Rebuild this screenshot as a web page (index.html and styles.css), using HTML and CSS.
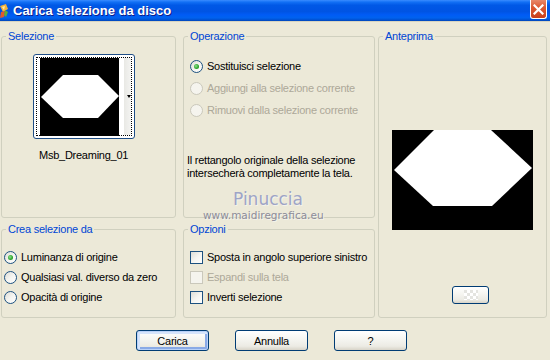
FILE: index.html
```html
<!DOCTYPE html>
<html lang="it">

<head>
  <meta charset="UTF-8">
  <meta name="viewport" content="width=device-width, initial-scale=1.0">
  <title>Carica selezione da disco</title>
  <link rel="stylesheet" href="styles.css">
</head>

<body>
  <div class="window">
    <div class="titlebar">
      <svg class="app-icon" width="9" height="16" viewBox="0 0 9 16">
        <path d="M0 3 L6 1 L8 6 L3 9 Z" fill="#f2b33d"/>
        <path d="M1 9 L5 8 L4 14 L0 15 Z" fill="#e2582c"/>
        <path d="M5 7 L8 9 L6 14 L4 12 Z" fill="#5fae3a"/>
        <path d="M2 4 L5 3 L4 7 Z" fill="#ffe9a8"/>
      </svg>
      <span class="title">Carica selezione da disco</span>
      <span class="close">
        <svg width="11" height="11" viewBox="0 0 11 11">
          <path d="M1.5 1.5 L9.5 9.5 M9.5 1.5 L1.5 9.5" stroke="#fff" stroke-width="2.2" stroke-linecap="square"/>
        </svg>
      </span>
    </div>

    <div class="dialog">
      <div class="panels">
        <fieldset class="group col-left">
          <legend>Selezione</legend>
          <div class="thumb">
            <div class="thumb-focus">
              <svg width="79" height="78" viewBox="0 0 79 78">
                <rect width="79" height="78" fill="#000"/>
                <polygon points="1,39 23,17 58,17 79,38 58,60 23,60" fill="#fff"/>
              </svg>
              <div class="thumb-arrow"><span class="caret"></span></div>
            </div>
          </div>
          <div class="thumb-name">Msb_Dreaming_01</div>
        </fieldset>

        <fieldset class="group col-mid op">
          <legend>Operazione</legend>
          <div class="op-list">
            <label class="opt"><span class="radio checked"></span>Sostituisci selezione</label>
            <label class="opt disabled"><span class="radio"></span>Aggiungi alla selezione corrente</label>
            <label class="opt disabled"><span class="radio"></span>Rimuovi dalla selezione corrente</label>
          </div>
          <p class="note">Il rettangolo originale della selezione<br>intersecherà completamente la tela.</p>
          <div class="watermark">
            <span class="wm-name">Pinuccia</span>
            <span class="wm-site">www.maidiregrafica.eu</span>
          </div>
        </fieldset>

        <fieldset class="group col-right preview">
          <legend>Anteprima</legend>
          <svg class="preview-img" width="141" height="100" viewBox="0 0 141 100">
            <rect width="141" height="100" fill="#000"/>
            <polygon points="2,40 42,0 99,0 140,38 100,76 41,76" fill="#fff"/>
          </svg>
          <button class="btn btn-small"><span class="checker"></span></button>
        </fieldset>

        <fieldset class="group col-left">
          <legend>Crea selezione da</legend>
          <div class="opt-list crea">
            <label class="opt"><span class="radio checked"></span>Luminanza di origine</label>
            <label class="opt"><span class="radio"></span>Qualsiasi val. diverso da zero</label>
            <label class="opt"><span class="radio"></span>Opacità di origine</label>
          </div>
        </fieldset>

        <fieldset class="group col-mid">
          <legend>Opzioni</legend>
          <div class="opt-list opz">
            <label class="opt"><span class="check"></span>Sposta in angolo superiore sinistro</label>
            <label class="opt disabled"><span class="check"></span>Espandi sulla tela</label>
            <label class="opt"><span class="check"></span>Inverti selezione</label>
          </div>
        </fieldset>
      </div>

      <div class="buttons">
        <button class="btn btn-default">Carica</button>
        <button class="btn">Annulla</button>
        <button class="btn">?</button>
      </div>
    </div>
  </div>
</body>

</html>
```

FILE: styles.css
```css
body {
  margin: 0;
  background-color: #ece9d8;
  font-family: "Liberation Sans", Arial, sans-serif;
  font-size: 11px;
  letter-spacing: -0.25px;
  color: #000;
}
.window {
  width: 550px;
  height: 360px;
  overflow: hidden;
}

/* title bar */
.titlebar {
  height: 22px;
  display: flex;
  align-items: center;
  background: linear-gradient(to bottom, #3a8cff 0%, #1270f5 10%, #0058e6 25%, #0054e3 55%, #005bf5 70%, #0062ef 85%, #0050d0 95%, #0046b8 100%);
  border-bottom: 1px solid #d8d4c0;
  box-sizing: border-box;
}
.app-icon {
  flex: none;
  margin-left: 0;
}
.title {
  margin-left: 4px;
  color: #fff;
  font-weight: bold;
  font-size: 13px;
  letter-spacing: 0;
  text-shadow: 1px 1px 0 #0f1e8a;
}
.close {
  margin-left: auto;
  margin-right: 3px;
  align-self: flex-start;
  width: 17px;
  height: 19px;
  box-sizing: border-box;
  border: 1px solid #fff;
  border-top: none;
  border-radius: 0 0 3px 3px;
  background: linear-gradient(to bottom, #e8886a 0%, #dc5a34 40%, #c8401c 100%);
  display: flex;
  align-items: center;
  justify-content: center;
}

/* panels */
.dialog {
  padding: 8px 0 0 1px;
}
.panels {
  display: grid;
  grid-template-columns: 182px 195px 169px;
  grid-template-rows: 188px 95px;
  row-gap: 5px;
}
.group {
  margin: 0;
  padding: 0;
  min-width: 0;
  border: 1px solid #d0d0bf;
  border-radius: 3px;
  box-sizing: border-box;
}
.group legend {
  margin-left: 4px;
  padding: 0 2px;
  line-height: 13px;
  color: #0046d5;
}
.col-left {
  grid-column: 1;
  margin-right: 7px;
}
.col-mid {
  grid-column: 2;
  margin-right: 3px;
}
.col-right {
  grid-column: 3;
}
.preview {
  grid-row: 1 / span 2;
}

/* selezione */
.thumb {
  margin: 11px 0 0 31px;
  width: 102px;
  height: 85px;
  box-sizing: border-box;
  border: 1px solid #1f4e86;
  border-radius: 3px;
  padding: 2px;
  background-color: #fff;
}
.thumb-focus {
  height: 100%;
  box-sizing: border-box;
  border: 1px dotted #000;
  display: flex;
  padding-left: 3px;
}
.thumb-focus svg {
  display: block;
}
.thumb-arrow {
  flex: 1;
  display: flex;
  align-items: center;
  justify-content: flex-end;
  background: linear-gradient(to right, #fff 0%, #fff 40%, #e8e8e4 41%, #f4f4f2 100%);
}
.caret {
  width: 0;
  height: 0;
  border-left: 2.5px solid transparent;
  border-right: 2.5px solid transparent;
  border-top: 3px solid #000;
}
.thumb-name {
  margin: 10px 0 0 37px;
  line-height: 13px;
}

/* operazione */
.op {
  position: relative;
}
.op-list {
  margin-top: 12px;
  padding-left: 6px;
}
.op-list .opt {
  height: 22px;
}
.opt {
  display: flex;
  align-items: center;
  gap: 4px;
  white-space: nowrap;
}
.opt-list {
  margin-top: 11px;
}
.opt-list .opt {
  height: 20px;
}
.crea {
  padding-left: 2px;
}
.opz {
  padding-left: 6px;
}
.disabled {
  color: #aca899;
}
.radio {
  flex: none;
  width: 13px;
  height: 13px;
  box-sizing: border-box;
  border: 1px solid #1c5180;
  border-radius: 50%;
  background: linear-gradient(135deg, #dcdcd6 0%, #f4f4f0 50%, #fff 100%);
  display: flex;
  align-items: center;
  justify-content: center;
}
.radio.checked::after {
  content: "";
  width: 5px;
  height: 5px;
  border-radius: 50%;
  background: radial-gradient(circle at 40% 40%, #8ee08e 0%, #2aa42a 60%, #1d8a1d 100%);
}
.disabled .radio,
.disabled .check {
  border-color: #cac8bb;
  background: #f5f4ee;
}
.check {
  flex: none;
  width: 13px;
  height: 13px;
  box-sizing: border-box;
  border: 1px solid #1c5180;
  background: linear-gradient(135deg, #dcdcd6 0%, #f4f4f0 50%, #fff 100%);
}
.note {
  margin: 33px 0 0 3px;
  line-height: 13px;
  white-space: nowrap;
}
.watermark {
  position: absolute;
  left: 19px;
  top: 146px;
  display: flex;
  flex-direction: column;
  font-family: "DejaVu Sans", sans-serif;
  letter-spacing: 0;
  pointer-events: none;
}
.wm-name {
  padding-left: 30px;
  font-size: 17px;
  line-height: 20px;
  color: #9ea4c6;
  text-shadow: 1px 1px 0 #f4f3ec;
}
.wm-site {
  font-size: 10.5px;
  line-height: 12px;
  color: #8c8c98;
  text-shadow: 1px 1px 0 #f4f3ec;
}

/* anteprima */
.preview-img {
  display: block;
  margin: 87px 0 0 13px;
}
.btn {
  font-family: "Liberation Sans", Arial, sans-serif;
  font-size: 11px;
  letter-spacing: -0.25px;
  color: #000;
  border: 1px solid #003c74;
  border-radius: 3px;
  background: linear-gradient(to bottom, #fff 0%, #f6f6f2 40%, #ecebe4 80%, #d8d4c8 100%);
  padding: 0;
  cursor: pointer;
}
.btn-small {
  display: block;
  margin: 56px 0 0 73px;
  width: 37px;
  height: 18px;
}
.checker {
  display: block;
  width: 14px;
  height: 10px;
  margin: 0 auto;
  background: repeating-conic-gradient(#fff 0 25%, #e4e4e0 0 50%) 0 0 / 6px 6px;
}

/* bottom buttons */
.buttons {
  display: flex;
  gap: 26px;
  margin: 12px 0 0 135px;
}
.buttons .btn {
  width: 73px;
  height: 21px;
}
.btn-default {
  box-shadow: inset 0 0 0 1px #b9d1f8, inset 1px 1px 0 2px #d6e4fb, inset -1px -1px 0 2px #8aaae6;
}
```
